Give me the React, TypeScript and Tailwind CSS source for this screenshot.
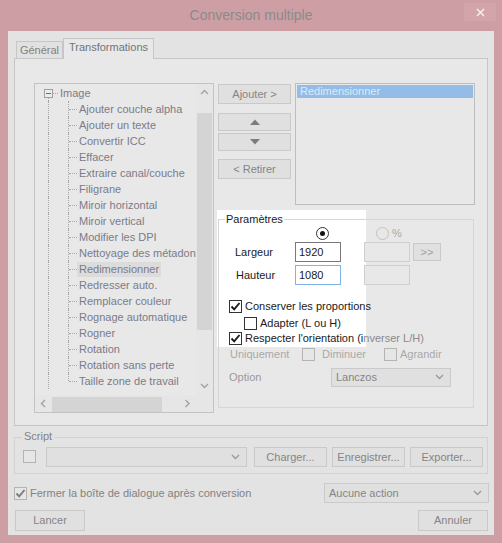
const imageOps = [
  "Ajouter couche alpha",
  "Ajouter un texte",
  "Convertir ICC",
  "Effacer",
  "Extraire canal/couche",
  "Filigrane",
  "Miroir horizontal",
  "Miroir vertical",
  "Modifier les DPI",
  "Nettoyage des métadonnées",
  "Redimensionner",
  "Redresser auto.",
  "Remplacer couleur",
  "Rognage automatique",
  "Rogner",
  "Rotation",
  "Rotation sans perte",
  "Taille zone de travail",
];

function Check({ color = "#1a1a1a" }: { color?: string }) {
  return (
    <svg width="11" height="11" viewBox="0 0 11 11">
      <path d="M1.5 5.5 L4.2 8.3 L9.5 2" fill="none" stroke={color} strokeWidth="1.9" />
    </svg>
  );
}

function Chevron({ dir = "down", color = "#9a9a9a" }: { dir?: "down" | "up" | "left" | "right"; color?: string }) {
  const d = {
    down: "M1 2 L4.5 5.5 L8 2",
    up: "M1 6 L4.5 2.5 L8 6",
    left: "M6 1 L2.5 4.5 L6 8",
    right: "M2.5 1 L6 4.5 L2.5 8",
  }[dir];
  return (
    <svg width="9" height="9" viewBox="0 0 9 9">
      <path d={d} fill="none" stroke={color} strokeWidth="1.4" />
    </svg>
  );
}

function Btn({ children, className = "" }: { children?: React.ReactNode; className?: string }) {
  return (
    <div className={`flex items-center justify-center border border-[#c9c9c9] bg-[#e0e0e0] text-[#858585] ${className}`}>
      {children}
    </div>
  );
}

function Combo({ label = "", className = "" }: { label?: string; className?: string }) {
  return (
    <div className={`flex items-center justify-between border border-[#cacaca] bg-[#e0e0e0] pl-[4px] pr-[6px] text-[#858585] ${className}`}>
      <span>{label}</span>
      <Chevron />
    </div>
  );
}

function Box({ checked = false, light = false, className = "" }: { checked?: boolean; light?: boolean; className?: string }) {
  return (
    <div
      className={`flex h-[13px] w-[13px] items-center justify-center border ${
        light ? "border-[#b4b4b4] bg-[#e6e6e6]" : "border-[#333] bg-white"
      } ${className}`}
    >
      {checked && <Check color={light ? "#7a7a7a" : "#1a1a1a"} />}
    </div>
  );
}

function TreeItem({ label, last, hover }: { label: string; last?: boolean; hover?: boolean }) {
  return (
    <div className="relative flex h-[16px] items-center whitespace-nowrap">
      <span className="absolute left-[13px] top-0 bottom-0 border-l border-dotted border-[#a9a9a9]" />
      <span
        className={`absolute left-[33px] top-0 border-l border-dotted border-[#a9a9a9] ${last ? "h-[8px]" : "bottom-0"}`}
      />
      <span className="absolute left-[34px] top-[8px] w-[8px] border-t border-dotted border-[#a9a9a9]" />
      <span className={`ml-[42px] px-[2px] leading-[15px] ${hover ? "bg-[#dcdcdc]" : ""}`}>{label}</span>
    </div>
  );
}

function TreeRoot({ label }: { label: string }) {
  return (
    <div className="relative flex h-[16px] items-center whitespace-nowrap">
      <span className="absolute left-[9px] top-[4px] flex h-[9px] w-[9px] items-center justify-center border border-[#a0a0a0] bg-[#ececec]">
        <span className="h-px w-[5px] bg-[#6e6e6e]" />
      </span>
      <span className="absolute left-[18px] top-[8px] w-[5px] border-t border-dotted border-[#a9a9a9]" />
      <span className="absolute left-[13px] top-[13px] bottom-0 border-l border-dotted border-[#a9a9a9]" />
      <span className="ml-[25px]">{label}</span>
    </div>
  );
}

function TreeView() {
  return (
    <div className="grid h-[330px] w-[180px] grid-cols-[1fr_17px] grid-rows-[1fr_17px] border border-[#c3c3c3] bg-[#e8e8e8] text-[#7b7b89]">
      <div className="overflow-hidden pt-[1px]">
        <TreeRoot label="Image" />
        {imageOps.map((op, i) => (
          <TreeItem key={op} label={op} last={i === imageOps.length - 1} hover={op === "Redimensionner"} />
        ))}
      </div>
      {/* vertical scrollbar */}
      <div className="flex flex-col bg-[#e6e6e6]">
        <div className="flex h-[17px] items-center justify-center">
          <Chevron dir="up" color="#a2a2a2" />
        </div>
        <div className="mx-[1px] mt-[12px] h-[217px] bg-[#d4d4d4]" />
        <div className="flex-1" />
        <div className="flex h-[17px] items-center justify-center">
          <Chevron dir="down" color="#a2a2a2" />
        </div>
      </div>
      {/* horizontal scrollbar */}
      <div className="flex items-center bg-[#e6e6e6]">
        <div className="flex w-[17px] items-center justify-center">
          <Chevron dir="left" color="#a2a2a2" />
        </div>
        <div className="mt-px h-[15px] w-[110px] bg-[#d4d4d4]" />
        <div className="flex-1" />
        <div className="flex w-[17px] items-center justify-center">
          <Chevron dir="right" color="#a2a2a2" />
        </div>
      </div>
      <div className="bg-[#e6e6e6]" />
    </div>
  );
}

function Radio({ checked = false }: { checked?: boolean }) {
  return (
    <div
      className={`flex h-[13px] w-[13px] items-center justify-center rounded-full border ${
        checked ? "border-[#333] bg-white" : "border-[#c2c2c2] bg-[#e8e8e8]"
      }`}
    >
      {checked && <div className="h-[5px] w-[5px] rounded-full bg-[#111]" />}
    </div>
  );
}

function Params() {
  return (
    <div className="relative mt-[14px] h-[189px] w-[256px]">
      {/* highlighted area behind the size controls */}
      <div className="absolute -left-px -top-[9px] h-[137px] w-[149px] bg-white" />
      <div className="absolute inset-0 border border-[#d6d6d6]" />
      <span className="absolute -top-[8px] left-[7px] bg-white px-[1px] text-[#1a1a1a]">Paramètres</span>

      <div className="relative flex flex-col text-[#1a1a1a]">
        <div className="mt-[8px] flex h-[13px] items-center">
          <div className="ml-[98px]">
            <Radio checked />
          </div>
          <div className="ml-[47px]">
            <Radio />
          </div>
          <span className="ml-[3px] text-[#a9a9a9]">%</span>
        </div>

        <div className="mt-[2px] flex h-[20px] items-center">
          <span className="ml-[17px] w-[60px]">Largeur</span>
          <div className="flex h-[20px] w-[46px] items-center border border-[#7a7a7a] bg-white pl-[3px]">1920</div>
          <div className="ml-[23px] h-[20px] w-[46px] border border-[#cfcfcf] bg-[#e8e8e8]" />
          <Btn className="ml-[3px] h-[18px] w-[28px] text-[#a0a0a0]">&gt;&gt;</Btn>
        </div>

        <div className="mt-[3px] flex h-[20px] items-center">
          <span className="ml-[18px] w-[59px]">Hauteur</span>
          <div className="flex h-[20px] w-[46px] items-center border border-[#7eb4ea] bg-white pl-[3px]">1080</div>
          <div className="ml-[23px] h-[20px] w-[46px] border border-[#cfcfcf] bg-[#e8e8e8]" />
        </div>

        <div className="mt-[15px] flex h-[13px] items-center">
          <Box checked className="ml-[11px]" />
          <span className="ml-[3px]">Conserver les proportions</span>
        </div>

        <div className="mt-[4px] flex h-[13px] items-center">
          <Box className="ml-[26px]" />
          <span className="ml-[3px]">Adapter (L ou H)</span>
        </div>

        <div className="mt-[2px] flex h-[13px] items-center">
          <Box checked className="ml-[11px]" />
          <span className="ml-[3px] whitespace-nowrap">
            Respecter l'orientation (i<span className="text-[#8a8a8a]">nverser L/H)</span>
          </span>
        </div>

        <div className="mt-[3px] flex h-[13px] items-center text-[#a8a8a8]">
          <span className="ml-[12px] w-[72px]">Uniquement</span>
          <Box light />
          <span className="ml-[7px] w-[62px]">Diminuer</span>
          <Box light />
          <span className="ml-[3px]">Agrandir</span>
        </div>

        <div className="mt-[7px] flex h-[19px] items-center">
          <span className="ml-[11px] w-[102px] text-[#9a9a9a]">Option</span>
          <Combo label="Lanczos" className="h-[19px] w-[120px] text-[#9a9a9a]" />
        </div>
      </div>
    </div>
  );
}

export default function App() {
  return (
    <div className="flex h-[543px] w-[502px] flex-col bg-[#cd9fa4] font-['Liberation_Sans',sans-serif] text-[11px] text-[#828282]">
      {/* title bar */}
      <div className="relative flex h-[31px] items-center justify-center">
        <span className="text-[14px] text-[#8a8a8a]">Conversion multiple</span>
        <div className="absolute right-[6px] top-[3px] flex h-[18px] w-[32px] items-center justify-center bg-[#d3a5aa]">
          <svg width="9" height="9" viewBox="0 0 9 9">
            <path d="M1 1 L8 8 M8 1 L1 8" stroke="#f4f4f4" strokeWidth="1.4" />
          </svg>
        </div>
      </div>

      <div className="mx-[8px] mb-[8px] flex flex-1 flex-col bg-[#e3e3e3] px-[6px] pt-[7px]">
        {/* tabs */}
        <div className="flex h-[20px] items-end pl-[2px]">
          <div className="flex h-[17px] w-[47px] items-center justify-center border border-b-0 border-[#c6c6c6] bg-[#e1e1e1]">
            Général
          </div>
          <div className="relative z-10 -mb-px flex h-[21px] w-[91px] items-center justify-center border border-b-0 border-[#c6c6c6] bg-[#e8e8e8] pb-[3px] text-[#747474]">
            Transformations
          </div>
        </div>

        {/* tab page */}
        <div className="flex h-[368px] border border-[#c6c6c6] bg-[#e8e8e8] pl-[19px] pt-[24px]">
          <TreeView />
          <div className="ml-[4px] flex flex-col">
            <div className="flex">
              <div className="flex w-[73px] flex-col">
                <Btn className="mt-px h-[20px]">Ajouter &gt;</Btn>
                <Btn className="mt-[9px] h-[18px]">
                  <svg width="10" height="6" viewBox="0 0 10 6">
                    <path d="M0 6 L5 0.5 L10 6 Z" fill="#7c7c7c" />
                  </svg>
                </Btn>
                <Btn className="mt-[2px] h-[18px]">
                  <svg width="10" height="6" viewBox="0 0 10 6">
                    <path d="M0 0 L5 5.5 L10 0 Z" fill="#7c7c7c" />
                  </svg>
                </Btn>
                <Btn className="mt-[8px] h-[20px]">&lt; Retirer</Btn>
              </div>
              <div className="ml-[4px] h-[122px] w-[180px] border border-[#bdbdbd] bg-[#e8e8e8] p-px">
                <div className="flex h-[13px] items-center bg-[#93bde7] pl-[3px] leading-none text-[#dde9f6]">
                  Redimensionner
                </div>
              </div>
            </div>
            <Params />
          </div>
        </div>

        {/* script */}
        <div className="relative mt-[11px] flex h-[37px] items-start border border-[#d2d2d2] pl-[8px] pt-[9px]">
          <span className="absolute -top-[7px] left-[7px] bg-[#e3e3e3] px-[2px] leading-none">Script</span>
          <Box light className="mt-[3px]" />
          <Combo className="ml-[10px] h-[20px] w-[201px]" />
          <Btn className="ml-[7px] h-[20px] w-[73px]">Charger...</Btn>
          <Btn className="ml-[5px] h-[20px] w-[73px]">Enregistrer...</Btn>
          <Btn className="ml-[5px] h-[20px] w-[73px]">Exporter...</Btn>
        </div>

        <div className="mt-[9px] flex h-[20px] items-center">
          <Box checked light />
          <span className="ml-[3px]">Fermer la boîte de dialogue après conversion</span>
          <Combo label="Aucune action" className="ml-auto mr-[-1px] h-[20px] w-[165px]" />
        </div>

        <div className="mt-[7px] flex h-[21px] items-center">
          <Btn className="ml-px h-[21px] w-[70px] border-[#8fc0ef]">Lancer</Btn>
          <Btn className="ml-auto h-[21px] w-[70px]">Annuler</Btn>
        </div>
      </div>
    </div>
  );
}
